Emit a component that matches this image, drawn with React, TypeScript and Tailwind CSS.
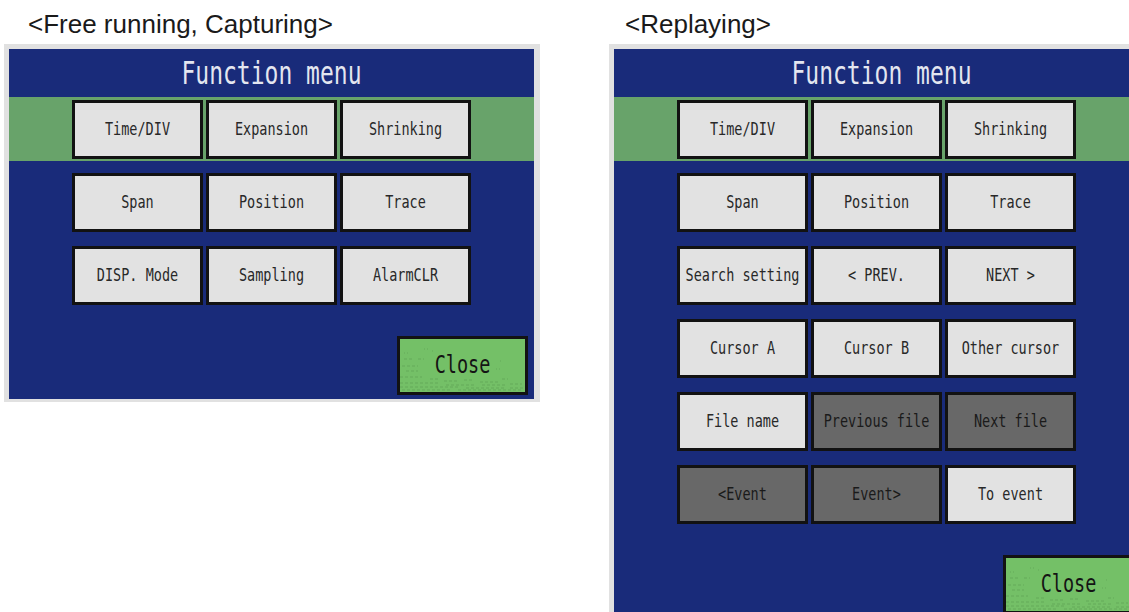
import React from "react";

type Btn = { label: string; dark?: boolean };

const mono = "font-['DejaVu_Sans_Mono','Liberation_Mono',monospace]";

function MenuButton({ label, dark }: Btn) {
  return (
    <div
      className={`w-[131px] h-[59px] shrink-0 border-[3px] border-[#121212] flex items-center justify-center ${
        dark ? "bg-[#686868] text-[#1a1a1a]" : "bg-[#e2e2e2] text-[#282828]"
      }`}
    >
      <span className={`${mono} inline-block text-[13.5px] leading-none scale-y-[1.24] whitespace-pre`}>
        {label}
      </span>
    </div>
  );
}

function Row({ items, green }: { items: Btn[]; green?: boolean }) {
  return (
    <div className={`flex shrink-0 gap-[3px] pl-[63px] ${green ? "bg-[#68a36a] h-[64px] pt-[3px]" : ""}`}>
      {items.map((b) => (
        <MenuButton key={b.label} {...b} />
      ))}
    </div>
  );
}

function CloseButton({ ml }: { ml: string }) {
  return (
    <div className={`${ml} relative w-[131px] h-[59px] shrink-0 border-[3px] border-[#121212] bg-[#74c067] flex items-center justify-center overflow-hidden`}>
      <svg className="absolute inset-0" width="125" height="53" viewBox="0 0 125 53">
        <g stroke="#5a9a52" strokeWidth="1" opacity="0.55">
          <path d="M4 20h10M18 20h6M2 27h16M6 32h12M0 38h22M30 40h8M44 42h14M64 41h10M80 43h18M102 40h6M0 44h40M46 46h30M82 46h24M110 45h12M0 48h60M66 49h40M110 49h15M2 51h50M58 51h64" strokeDasharray="3 2" />
          <path d="M24 10h4M32 12h2M100 22h3M96 30h6M4 14h6" strokeDasharray="1 2" />
        </g>
      </svg>
      <span className={`${mono} relative inline-block text-[18.5px] leading-none scale-y-[1.38] text-[#141414]`}>Close</span>
    </div>
  );
}

function Title() {
  return (
    <div className="h-[48px] shrink-0 flex items-center justify-center">
      <span className={`${mono} inline-block text-[23px] leading-none scale-y-[1.36] text-[#e4e6f0] whitespace-pre`}>
        Function menu
      </span>
    </div>
  );
}

const r1: Btn[] = [{ label: "Time/DIV" }, { label: "Expansion" }, { label: "Shrinking" }];
const r2: Btn[] = [{ label: "Span" }, { label: "Position" }, { label: "Trace" }];
const r3a: Btn[] = [{ label: "DISP. Mode" }, { label: "Sampling" }, { label: "AlarmCLR" }];
const r3b: Btn[] = [{ label: "Search setting" }, { label: "< PREV." }, { label: "NEXT >" }];
const r4: Btn[] = [{ label: "Cursor A" }, { label: "Cursor B" }, { label: "Other cursor" }];
const r5: Btn[] = [{ label: "File name" }, { label: "Previous file", dark: true }, { label: "Next file", dark: true }];
const r6: Btn[] = [{ label: "<Event", dark: true }, { label: "Event>", dark: true }, { label: "To event" }];

const label = "font-['Liberation_Sans',Arial,sans-serif] text-[26px] leading-[30px] text-[#1a1a1a] h-[44px] pt-[9px] whitespace-pre";

export default function App() {
  return (
    <div className="w-[1129px] h-[612px] overflow-hidden bg-white flex">
      <div className="ml-[4px] w-[536px] shrink-0 flex flex-col">
        <div className={`${label} pl-[24px]`}>{"<Free running, Capturing>"}</div>
        <div className="bg-[#e1e1e1] pt-[5px] pl-[5px] pr-[6px] pb-[3px]">
          <div className="bg-[#192b7a] h-[350px] flex flex-col">
            <Title />
            <Row items={r1} green />
            <div className="mt-[12px] shrink-0 flex flex-col gap-[14px]">
              <Row items={r2} />
              <Row items={r3a} />
            </div>
            <div className="mt-[31px] shrink-0 flex">
              <CloseButton ml="ml-[388px]" />
            </div>
          </div>
        </div>
      </div>
      <div className="ml-[69px] w-[540px] shrink-0 flex flex-col">
        <div className={`${label} pl-[16px]`}>{"<Replaying>"}</div>
        <div className="bg-[#e1e1e1] pt-[5px] pl-[5px] flex-1 min-h-0">
          <div className="bg-[#192b7a] h-[600px] flex flex-col">
            <Title />
            <Row items={r1} green />
            <div className="mt-[12px] shrink-0 flex flex-col gap-[14px]">
              <Row items={r2} />
              <Row items={r3b} />
              <Row items={r4} />
              <Row items={r5} />
              <Row items={r6} />
            </div>
            <div className="mt-[31px] shrink-0 flex">
              <CloseButton ml="ml-[389px]" />
            </div>
          </div>
        </div>
      </div>
    </div>
  );
}
